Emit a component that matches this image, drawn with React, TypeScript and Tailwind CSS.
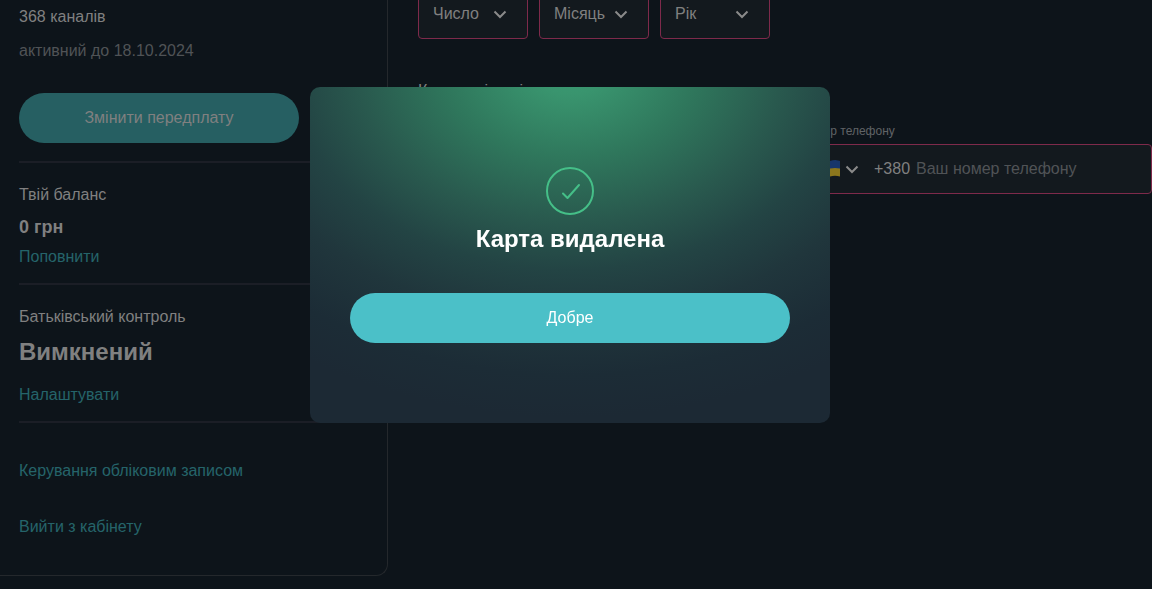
function Chevron({ className = "" }: { className?: string }) {
  return (
    <svg
      className={`pointer-events-none h-3 w-3.5 shrink-0 ${className}`}
      viewBox="0 0 14 12"
      fill="none"
      stroke="#8a8a8a"
      strokeWidth="2"
      aria-hidden="true"
    >
      <path d="M1.5 3.5 7 9l5.5-5.5" />
    </svg>
  );
}

function DateSelect({ label }: { label: string }) {
  return (
    <div className="relative h-[50px] w-[110px]">
      <select
        aria-label={label}
        className="h-full w-full appearance-none rounded border border-[#7e2a4b] bg-[#13191e] pr-10 pl-3.5 text-[#808080]"
      >
        <option>{label}</option>
      </select>
      <Chevron className="absolute top-1/2 right-[21px] -mt-1.5" />
    </div>
  );
}

function Divider() {
  return <hr className="mr-[19px] h-0.5 border-0 bg-[#1b1e26]" />;
}

function Sidebar() {
  const link = "block w-fit leading-6 text-[#25646a]";
  return (
    <aside className="h-fit w-[388px] shrink-0 rounded-br-xl border-r border-b border-[#24282c] pt-[5px] pb-9 pl-[19px]">
      <p className="leading-6 text-[#808080]">368 каналів</p>
      <p className="mt-2.5 mb-[30px] leading-6 text-[#505356]">активний до 18.10.2024</p>
      <button className="mb-[18px] h-[50px] w-[280px] rounded-full bg-[#265f62] text-[#808080]">
        Змінити передплату
      </button>
      <Divider />
      <section className="pt-5 pb-3.5">
        <h2 className="leading-6 text-[#808080]">Твій баланс</h2>
        <p className="mt-2 mb-1.5 text-lg leading-6 font-bold text-[#808080]">0 грн</p>
        <a href="#balance" className={link}>Поповнити</a>
      </section>
      <Divider />
      <section className="pt-5 pb-3.5">
        <h2 className="leading-6 text-[#808080]">Батьківський контроль</h2>
        <p className="mt-[7px] mb-[15px] text-2xl leading-8 font-bold text-[#808080]">Вимкнений</p>
        <a href="#parental" className={link}>Налаштувати</a>
      </section>
      <Divider />
      <nav className="flex flex-col gap-8 pt-9">
        <a href="#account" className={link}>Керування обліковим записом</a>
        <a href="#logout" className={link}>Вийти з кабінету</a>
      </nav>
    </aside>
  );
}

function Flag() {
  return (
    <svg className="h-5 w-5 shrink-0" viewBox="0 0 20 20" aria-hidden="true">
      <path d="M0 2Q5 3.500 10 2T18 1.500Q19.500 1.500 20 2V10H0Z" fill="#17366b" />
      <path d="M0 9.500Q5 10.500 10 9.500T20 9.500V17.500Q15 16 10 17.500T0 17.500Z" fill="#8b761d" />
    </svg>
  );
}

function ProfileForm() {
  return (
    <form className="min-w-0 flex-1 pl-[30px]">
      <div className="-mt-[11px] flex gap-[11px]">
        <DateSelect label="Число" />
        <DateSelect label="Місяць" />
        <DateSelect label="Рік" />
      </div>
      <h2 className="mt-10 leading-6 text-[#808080]">Контактні дані</h2>
      <div className="mt-[19px] grid grid-cols-2 gap-[30px]">
        <div className="col-start-2">
          <label htmlFor="phone" className="block pb-1 text-xs leading-[18px] text-[#606366]">
            Номер телефону
          </label>
          <div className="flex h-[50px] items-center rounded border border-[#7e2a4b] bg-[#13191e] pl-[19px]">
            <Flag />
            <Chevron className="mr-[15px] ml-[5px]" />
            <span className="mr-1.5 text-[#808080]">+380</span>
            <input
              id="phone"
              type="tel"
              placeholder="Ваш номер телефону"
              className="min-w-0 flex-1 bg-transparent text-[#808080] outline-none placeholder:text-[#505356]"
            />
          </div>
        </div>
      </div>
    </form>
  );
}

function SuccessDialog() {
  return (
    <div className="fixed inset-0 flex items-start justify-center pt-[87px] pr-3">
      <div
        role="dialog"
        aria-modal="true"
        aria-labelledby="dialog-title"
        className="flex w-[520px] flex-col items-center rounded-[10px] bg-[#1c2934] bg-[radial-gradient(ellipse_480px_350px_at_50%_-20px,#3b9c73_0%,#39946e_8%,#2f775c_26%,#29594e_44%,#234444_58%,#20363c_72%,#1c2c36_88%,#1c2934_100%)] px-10 pt-20 pb-20"
      >
        <svg className="h-12 w-12" viewBox="0 0 48 48" fill="none" stroke="#45bf88" strokeWidth="2" aria-hidden="true">
          <circle cx="24" cy="24" r="23" />
          <path d="m17 26.500 4.500 4.500L33 18" strokeLinecap="round" strokeLinejoin="round" />
        </svg>
        <h1 id="dialog-title" className="mt-2 text-2xl leading-8 font-bold text-white">
          Карта видалена
        </h1>
        <button className="mt-[38px] h-[50px] w-full rounded-full bg-[#4bc0c8] text-white">Добре</button>
      </div>
    </div>
  );
}

export default function App() {
  return (
    <div className="min-h-screen overflow-hidden bg-[#0d141a] font-['Liberation_Sans',Arial,sans-serif] text-base">
      <div className="flex">
        <Sidebar />
        <ProfileForm />
      </div>
      <SuccessDialog />
    </div>
  );
}
